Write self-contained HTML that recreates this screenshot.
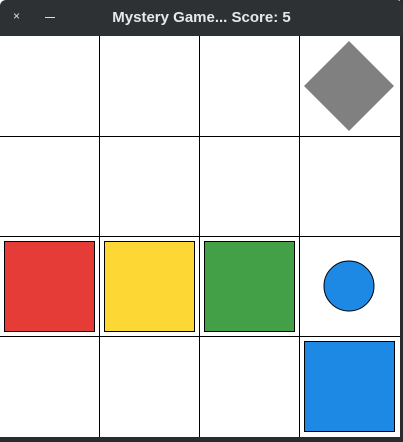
<!DOCTYPE html>
<html><head><style>
html,body{margin:0;padding:0;width:403px;height:442px;overflow:hidden;background:#2b2b2b;}
.win{position:absolute;left:0;top:0;width:400px;height:437px;background:#fff;}
.tb{position:absolute;left:0;top:0;width:403px;height:36px;background:#2e3134;border-radius:6px 6px 0 0;color:#dfdfdf;font-family:"Liberation Sans",sans-serif;}
.title{position:absolute;left:0;width:403px;top:9px;text-align:center;font-weight:bold;font-size:15px;color:#e8e8e8;}
.x{position:absolute;left:13px;top:9px;font-size:12px;}
.m{position:absolute;left:45px;top:17px;width:10px;height:1px;background:#ddd;}
.v,.h{position:absolute;background:#000;}
.v{width:1px;top:36px;height:401px;}
.h{height:1px;left:0;width:400px;}
.sq{position:absolute;box-sizing:border-box;border:1px solid #000;width:91px;height:91px;}
</style></head><body>
<div class="win"></div>
<div class="tb"><span class="x">×</span><div class="m"></div><div class="title">Mystery Game... Score: 5</div></div>
<div class="v" style="left:99px"></div>
<div class="v" style="left:199px"></div>
<div class="v" style="left:299px"></div>
<div class="h" style="top:136px"></div>
<div class="h" style="top:236px"></div>
<div class="h" style="top:336px"></div>
<div class="sq" style="left:4px;top:241px;background:#e53c37"></div>
<div class="sq" style="left:104px;top:241px;background:#fdd835"></div>
<div class="sq" style="left:204px;top:241px;background:#43a047"></div>
<div class="sq" style="left:304px;top:341px;background:#1e88e5"></div>
<svg style="position:absolute;left:0;top:0" width="403" height="442">
<polygon points="349,41 394,86 349,131 304,86" fill="#808080"/>
<circle cx="349" cy="286" r="25" fill="#1e88e5" stroke="#000" stroke-width="1"/>
</svg>
</body></html>
